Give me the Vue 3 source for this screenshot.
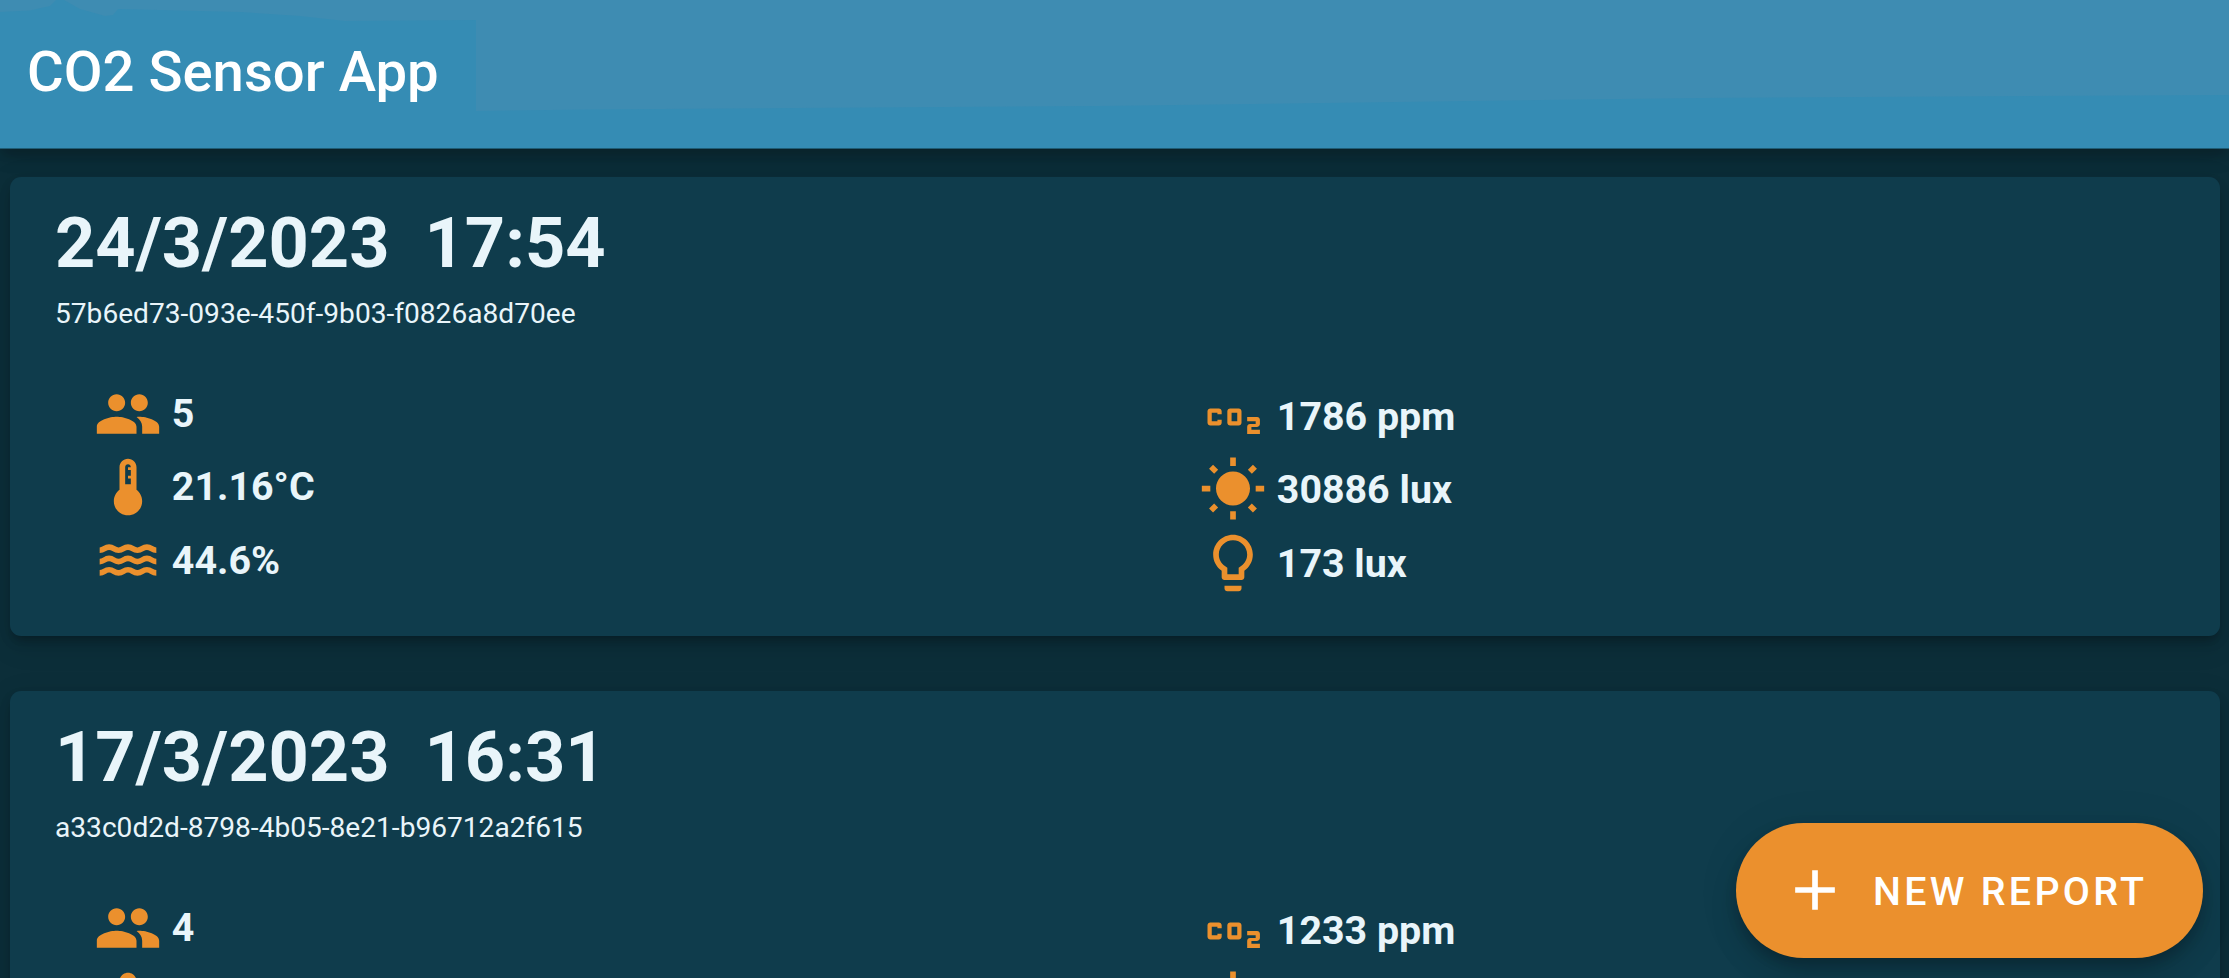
<script setup>
const icons = {
  people: 'M16 11c1.66 0 2.99-1.34 2.99-3S17.66 5 16 5c-1.66 0-3 1.34-3 3s1.34 3 3 3zm-8 0c1.66 0 2.99-1.34 2.99-3S9.66 5 8 5C6.34 5 5 6.34 5 8s1.34 3 3 3zm0 2c-2.33 0-7 1.17-7 3.5V19h14v-2.5c0-2.33-4.67-3.5-7-3.5zm8 0c-.29 0-.62.02-.97.05 1.16.84 1.97 1.97 1.97 3.45V19h6v-2.5c0-2.33-4.67-3.5-7-3.5z',
  thermometer: 'M15 13V5c0-1.66-1.34-3-3-3S9 3.34 9 5v8c-1.21.91-2 2.37-2 4 0 2.76 2.24 5 5 5s5-2.24 5-5c0-1.63-.79-3.09-2-4zm-4-8c0-.55.45-1 1-1s1 .45 1 1h-1v1h1v2h-1v1h1v2h-2V5z',
  co2: 'M14 9h-3c-.55 0-1 .45-1 1v4c0 .55.45 1 1 1h3c.55 0 1-.45 1-1v-4c0-.55-.45-1-1-1zm-.5 4.5h-2v-3h2v3zM8 13v1c0 .55-.45 1-1 1H4c-.55 0-1-.45-1-1v-4c0-.55.45-1 1-1h3c.55 0 1 .45 1 1v1H6.5v-.5h-2v3h2V13H8zm12.5 2.5h-2v1h3V18H17v-2.5c0-.55.45-1 1-1h2v-1h-3V12h3.5c.55 0 1 .45 1 1v1.5c0 .55-.45 1-1 1z',
  sun: 'M6.76 4.84l-1.8-1.79-1.41 1.41 1.79 1.79 1.42-1.41zM4 10.5H1v2h3v-2zm9-9.95h-2V3.5h2V.55zm7.45 3.91l-1.41-1.41-1.79 1.79 1.41 1.41 1.79-1.79zm-3.21 13.7l1.79 1.8 1.41-1.41-1.8-1.79-1.4 1.4zM20 10.5v2h3v-2h-3zm-8-5c-3.31 0-6 2.69-6 6s2.69 6 6 6 6-2.69 6-6-2.69-6-6-6zm-1 16.95h2V19.5h-2v2.95zm-7.45-3.91l1.41 1.41 1.79-1.8-1.41-1.41-1.79 1.8z',
  bulb: 'M9 21c0 .55.45 1 1 1h4c.55 0 1-.45 1-1v-1H9v1zm3-19C8.14 2 5 5.14 5 9c0 2.38 1.19 4.47 3 5.74V17c0 .55.45 1 1 1h6c.55 0 1-.45 1-1v-2.26c1.81-1.27 3-3.36 3-5.74 0-3.86-3.14-7-7-7zm2.85 11.1l-.85.6V16h-4v-2.3l-.85-.6C7.8 12.16 7 10.63 7 9c0-2.76 2.24-5 5-5s5 2.24 5 5c0 1.63-.8 3.16-2.15 4.1z'
}
const wave = 'c1.67 0 1.67-1.1 3.33-1.1s1.67 1.1 3.34 1.1 1.66-1.1 3.33-1.1 1.67 1.1 3.33 1.1 1.67-1.1 3.34-1.1 1.66 1.1 3.33 1.1'
const waves = ['M2 8.55' + wave, 'M2 12.55' + wave, 'M2 16.55' + wave]

const reports = [
  {
    id: '57b6ed73-093e-450f-9b03-f0826a8d70ee',
    date: '24/3/2023',
    time: '17:54',
    columns: [
      [['people', '5'], ['thermometer', '21.16°C'], ['waves', '44.6%']],
      [['co2', '1786 ppm'], ['sun', '30886 lux'], ['bulb', '173 lux']]
    ]
  },
  {
    id: 'a33c0d2d-8798-4b05-8e21-b96712a2f615',
    date: '17/3/2023',
    time: '16:31',
    columns: [
      [['people', '4'], ['thermometer', '']],
      [['co2', '1233 ppm'], ['sun', '']]
    ]
  }
]
</script>

<template>
  <div class="app">
    <header class="bar">
      <svg class="bar-tint" viewBox="0 0 2229 148" preserveAspectRatio="none" aria-hidden="true">
        <path d="M0 0H56L50 6 30 10.500 0 12ZM64 0H2229V95L1700 98 1100 106 590 109.500 476 111V20L345 21 300 16 240 12 118 9 113 15 105 16 80 9Z" />
      </svg>
      <h1 class="title">CO2 Sensor App</h1>
    </header>

    <main class="list">
      <article v-for="report in reports" :key="report.id" class="card">
        <h2 class="when"><span>{{ report.date }}</span><span>{{ report.time }}</span></h2>
        <p class="uuid">{{ report.id }}</p>
        <div class="metrics">
          <ul v-for="(column, c) in report.columns" :key="c" class="column">
            <li v-for="[icon, value] in column" :key="icon" class="metric">
              <svg class="icon" viewBox="0 0 24 24" aria-hidden="true">
                <g v-if="icon === 'waves'" class="waves">
                  <path v-for="d in waves" :key="d" :d="d" />
                </g>
                <path v-else :d="icons[icon]" />
              </svg>
              <span v-if="value" class="value">{{ value }}</span>
            </li>
          </ul>
        </div>
      </article>
    </main>

    <button class="fab" type="button">
      <svg class="plus" viewBox="0 0 24 24" aria-hidden="true"><path d="M19 13h-6v6h-2v-6H5v-2h6V5h2v6h6v2z" /></svg>
      <span class="fab-label">NEW REPORT</span>
    </button>
  </div>
</template>

<style>
body { background: #0c2e39; overflow: hidden; }
</style>

<style scoped>
.app {
  position: relative;
  box-sizing: border-box;
  height: 978px;
  overflow: hidden;
  background: #0c2e39;
  color: #e9f5fa;
  font-family: Roboto, "Liberation Sans", sans-serif;
}
.bar {
  position: relative;
  z-index: 1;
  display: flex;
  align-items: center;
  box-sizing: border-box;
  height: 149px;
  padding: 0 27px 5px;
  border-bottom: 1px solid #1f5c75;
  background: #358cb4;
  box-shadow: 0 6px 11px -3px rgba(0, 0, 0, .16), 0 11px 14px rgba(0, 0, 0, .1), 0 3px 28px rgba(0, 0, 0, .08);
}
.bar-tint { position: absolute; inset: 0; width: 100%; height: 100%; fill: #3e8cb2; }
.title { position: relative; margin: 0; font-size: 56.25px; line-height: 66px; font-weight: 500; color: #fff; }
.list { display: flex; flex-direction: column; gap: 55.5px; padding: 28px 9px 0 10px; }
.card {
  flex: none;
  box-sizing: border-box;
  height: 458.5px;
  padding: 25px 45px 0;
  border-radius: 11px;
  background: #0f3c4c;
  box-shadow: 0 8px 8px -6px rgba(0, 0, 0, .2), 0 8px 28px 3px rgba(0, 0, 0, .1), 0 6px 12px rgba(0, 0, 0, .12);
}
.when { display: flex; gap: 35px; margin: 0; font-size: 70.3px; line-height: 82px; font-weight: 700; }
.uuid { margin: 13px 0 0; font-size: 28.125px; line-height: 34px; }
.metrics { display: grid; grid-template-columns: 1fr 1fr; margin: 46px -45px 0; }
.column { margin: 0; padding: 0 0 0 84.3px; list-style: none; }
.column + .column { padding-top: 3px; }
.metric { display: flex; align-items: center; gap: 9.5px; height: 73.3px; }
.icon { flex: none; width: 68px; height: 68px; fill: #eb902d; }
.waves { fill: none; stroke: #eb902d; stroke-width: 2; }
.value { padding-top: 1px; font-size: 39.375px; line-height: 46px; font-weight: 700; }
.fab {
  position: absolute;
  z-index: 2;
  right: 26px;
  bottom: 20px;
  display: flex;
  align-items: center;
  box-sizing: border-box;
  gap: 24px;
  width: 467px;
  height: 135px;
  padding: 0 0 0 45px;
  border: 0;
  border-radius: 68px;
  background: #eb902d;
  color: #fff;
  font: 500 39.375px/46px Roboto, "Liberation Sans", sans-serif;
  letter-spacing: 3.3px;
  box-shadow: 0 8px 14px -3px rgba(0, 0, 0, .2), 0 17px 28px rgba(0, 0, 0, .14), 0 3px 50px rgba(0, 0, 0, .06);
}
.fab-label { padding-top: 2px; white-space: nowrap; }
.plus { flex: none; width: 68px; height: 68px; margin-bottom: 1px; fill: #fff; }
</style>
